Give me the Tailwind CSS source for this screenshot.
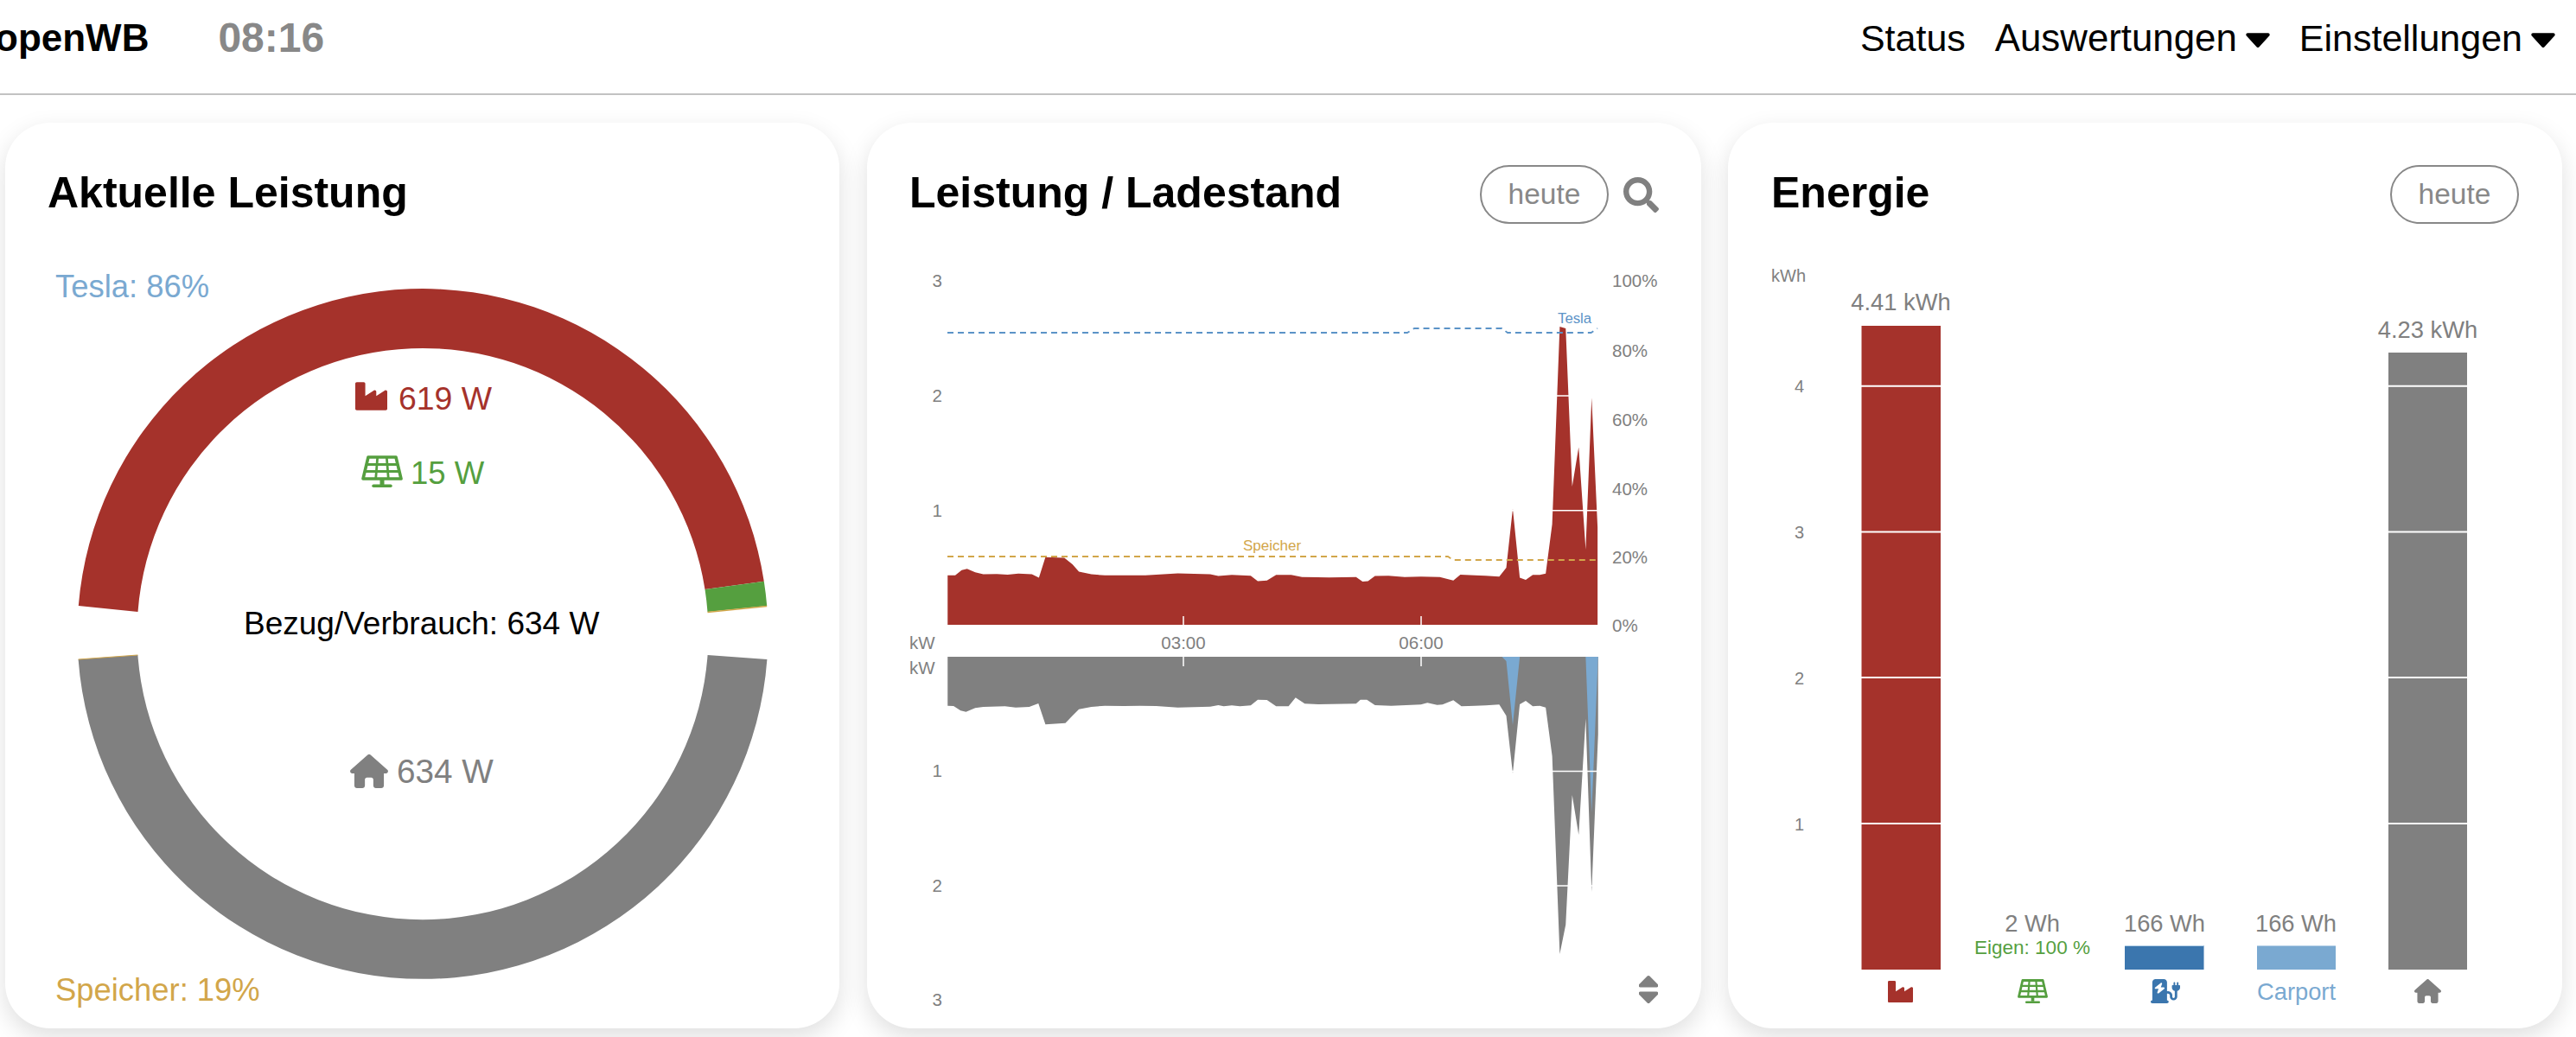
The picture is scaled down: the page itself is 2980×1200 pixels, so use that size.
<!DOCTYPE html>
<html lang="de">
<head>
<meta charset="utf-8">
<title>openWB</title>
<script src="https://cdn.jsdelivr.net/npm/@tailwindcss/browser@4"></script>
</head>
<body class="w-[2980px] h-[1200px] overflow-hidden bg-white text-black font-['Liberation_Sans',Arial,sans-serif]">
<nav class="h-[110px] flex items-center justify-between border-b-2 border-[#c2c2c2] pr-[24px] pb-[20px]">
  <div class="flex items-center gap-[80px] -ml-[6px]">
    <span class="text-[44px] font-bold">openWB</span>
    <span class="text-[48px] font-bold text-[#888888]">08:16</span>
  </div>
  <div class="flex items-center gap-[34px] text-[43px]">
    <span>Status</span>
    <span class="flex items-center gap-[10px]"><span class="text-[43.8px]">Auswertungen</span>
      <svg class="w-[28px] h-[17px] mt-[4px]" viewBox="8 190 304 170" preserveAspectRatio="none"><path d="M31.3 192h257.3c17.8 0 26.7 21.5 14.1 34.1L174.1 354.8c-7.8 7.8-20.5 7.8-28.3 0L17.2 226.1C4.6 213.5 13.5 192 31.3 192z"/></svg>
    </span>
    <span class="flex items-center gap-[10px]">Einstellungen
      <svg class="w-[28px] h-[17px] mt-[4px]" viewBox="8 190 304 170" preserveAspectRatio="none"><path d="M31.3 192h257.3c17.8 0 26.7 21.5 14.1 34.1L174.1 354.8c-7.8 7.8-20.5 7.8-28.3 0L17.2 226.1C4.6 213.5 13.5 192 31.3 192z"/></svg>
    </span>
  </div>
</nav>
<main class="flex gap-[32px] pl-[6px] pt-[32px]">

  <!-- Aktuelle Leistung -->
  <section class="w-[965px] h-[1048px] rounded-[52px] bg-white shadow-[0_10px_28px_rgba(0,0,0,0.13)] flex flex-col">
    <header class="flex items-center justify-between h-[68px] mt-[49px] pl-[49px] pr-[50px]">
      <h2 class="text-[50px] font-bold -mt-[3px]">Aktuelle Leistung</h2>
    </header>
    <svg class="w-[965px] h-[931px]" viewBox="6 259 965 931">
      <path d="M90.8 701A399.5 399.5 0 0 1 883.8 672.7L815.5 682A330.5 330.5 0 0 0 159.5 708Z" fill="#a5322b"/>
      <path d="M883.8 672.7A399.5 399.5 0 0 1 887.2 701L818.5 708A330.5 330.5 0 0 0 815.5 682Z" fill="#559f3f"/>
      <path d="M887.2 701.5L818.5 708.5" stroke="#d2a64a" stroke-width="1.5"/>
      <path d="M90.6 763A399.5 399.5 0 0 0 887.4 763L818.6 758A330.5 330.5 0 0 1 159.4 758Z" fill="#808080"/>
      <path d="M90.6 763L159.4 758" stroke="#d2a64a" stroke-width="1"/>
      <text x="64" y="344" font-size="36.4" fill="#7aa9d1">Tesla: 86%</text>
      <text x="64" y="1158" font-size="36.4" fill="#d2a64a">Speicher: 19%</text>
      <svg x="411" y="442" width="37" height="33" viewBox="0 32 512 448" fill="#a5322b"><path d="M475.115 163.781L336 252.309v-68.28c0-18.916-20.931-30.399-36.885-20.248L160 252.309V56c0-13.255-10.745-24-24-24H24C10.745 32 0 42.745 0 56v400c0 13.255 10.745 24 24 24h464c13.255 0 24-10.745 24-24V184.029c0-18.917-20.931-30.399-36.885-20.248z"/></svg>
      <text x="461" y="474" font-size="37.4" fill="#a5322b">619 W</text>
      <svg x="418" y="527" width="48" height="37" viewBox="0 0 48 37" fill="none" stroke="#559f3f" stroke-width="3.6">
        <path d="M8 2H40L46 27H2Z" stroke-linejoin="round"/>
        <path d="M18.7 2L16.7 27M29.3 2L31.3 27M5 10.5H43M3.5 18.5H44.5" stroke-width="2.8"/>
        <path d="M24 27V34" stroke-width="5"/><path d="M14 35.3H34" stroke-width="3.4" stroke-linecap="round"/>
      </svg>
      <text x="475" y="560" font-size="36.5" fill="#559f3f">15 W</text>
      <text x="282" y="734" font-size="37" fill="#000">Bezug/Verbrauch: 634 W</text>
      <svg x="405" y="873" width="44" height="39" viewBox="0 0 576 512" fill="#808080"><path d="M575.8 255.5c0 18-15 32.1-32 32.1h-32l.7 160.2c0 2.7-.2 5.4-.5 8.1V472c0 22.1-17.9 40-40 40H456c-1.1 0-2.2 0-3.3-.1c-1.4 .1-2.8 .1-4.2 .1H416 392c-22.1 0-40-17.9-40-40V448 384c0-17.7-14.3-32-32-32H256c-17.7 0-32 14.3-32 32v64 24c0 22.1-17.9 40-40 40H160 128.1c-1.5 0-3-.1-4.5-.2c-1.2 .1-2.4 .2-3.6 .2H104c-22.1 0-40-17.9-40-40V360c0-.9 0-1.9 .1-2.8V287.6H32c-18 0-32-14-32-32.1c0-9 3-17 10-24L266.4 8c7-7 15-8 22-8s15 2 21 7L564.8 231.5c8 7 12 15 11 24z"/></svg>
      <text x="459" y="906" font-size="38.7" fill="#808080">634 W</text>
    </svg>
  </section>

  <!-- Leistung / Ladestand -->
  <section class="w-[965px] h-[1048px] rounded-[52px] bg-white shadow-[0_10px_28px_rgba(0,0,0,0.13)] flex flex-col">
    <header class="flex items-center justify-between h-[68px] mt-[49px] pl-[49px] pr-[49px]">
      <h2 class="text-[50px] font-bold -mt-[3px]">Leistung / Ladestand</h2>
      <div class="flex items-center gap-[17px]">
        <button class="w-[149px] h-[68px] rounded-[34px] border-2 border-[#888888] text-[33.5px] text-[#888888]">heute</button>
        <svg class="w-[41px] h-[41px]" viewBox="0 0 512 512" fill="#808080"><path d="M505 442.7L405.3 343c-4.5-4.5-10.6-7-17-7H372c27.6-35.3 44-79.7 44-128C416 93.1 322.9 0 208 0S0 93.1 0 208s93.1 208 208 208c48.3 0 92.7-16.4 128-44v16.3c0 6.4 2.5 12.5 7 17l99.7 99.7c9.4 9.4 24.6 9.4 33.9 0l28.3-28.3c9.4-9.4 9.4-24.6.1-34zM208 336c-70.7 0-128-57.2-128-128 0-70.7 57.2-128 128-128 70.7 0 128 57.2 128 128 0 70.7-57.2 128-128 128z"/></svg>
      </div>
    </header>
    <svg class="w-[965px] h-[931px]" viewBox="1003 259 965 931">
      <g transform="translate(1000 130) scale(.625 .3954)">
        <path fill="#a5322b" d="M154 1500V1355L168 1355 180 1340 190 1336 205 1346 220 1352 245 1351 265 1353 285 1350 310 1352 323 1362 335 1302 370 1304 385 1323 397 1344 420 1352 445 1355 520 1355 580 1349 640 1352 655 1357 680 1354 715 1356 728 1372 745 1370 762 1354 790 1354 810 1360 860 1361 910 1360 922 1373 932 1372 945 1357 970 1356 1000 1360 1030 1359 1065 1360 1090 1370 1103 1353 1130 1355 1150 1356 1175 1359 1188 1333 1200 1160 1213 1362 1224 1368 1237 1354 1250 1354 1261 1350 1273 1205 1287 627 1298 632 1310 1095 1322 980 1335 1280 1346 835 1357 1214V1500Z"/>
      </g>
      <g transform="translate(1000 700) scale(.625 .3333)">
        <path fill="#808080" d="M154 180V350L165 351 178 367 188 371 205 358 220 354 260 352 280 356 305 354 322 342 335 415 372 410 385 385 397 362 420 354 445 350 480 351 510 350 540 351 580 356 640 353 655 348 665 352 680 349 695 352 715 349 728 329 745 330 762 352 785 352 798 322 815 343 840 345 910 343 918 329 930 329 945 348 975 350 1030 346 1042 340 1060 347 1070 346 1090 331 1105 352 1130 350 1150 349 1175 346 1188 385 1200 585 1213 345 1224 333 1237 352 1250 350 1261 356 1273 525 1287 1212 1298 1110 1310 660 1322 798 1335 395 1346 996 1358 450V180Z"/>
        <path fill="#7aa9d1" d="M1180 180L1188 195 1200 417 1213 180ZM1335 180L1346 720 1358 180Z"/>
      </g>
      <g stroke="#ffffff" stroke-width="1.5">
        <path d="M1096 458H1848M1096 590.7H1848M1096 892.5H1848M1096 1025H1848"/>
        <path d="M1369 713V723M1644 713V723M1369 760V771M1644 760V771"/>
      </g>
      <path d="M1096 385H1628L1636 380H1737.5L1744 385H1840.6L1848 380" fill="none" stroke="#5b93c7" stroke-width="1.8" stroke-dasharray="7 5"/>
      <path d="M1096 644H1675L1681 648H1848" fill="none" stroke="#d2a64a" stroke-width="1.8" stroke-dasharray="7 5"/>
      <text x="1802" y="374" font-size="16.8" fill="#5b93c7">Tesla</text>
      <text x="1438" y="637" font-size="17" fill="#d2a64a">Speicher</text>
      <g font-size="20.5" fill="#808080">
        <g text-anchor="end">
          <text x="1090" y="332">3</text><text x="1090" y="465">2</text><text x="1090" y="598">1</text>
          <text x="1090" y="899">1</text><text x="1090" y="1032">2</text><text x="1090" y="1164">3</text>
        </g>
        <text x="1052" y="751">kW</text><text x="1052" y="780">kW</text>
        <text x="1369" y="751" text-anchor="middle">03:00</text><text x="1644" y="751" text-anchor="middle">06:00</text>
        <text x="1865" y="332">100%</text><text x="1865" y="413">80%</text><text x="1865" y="493">60%</text><text x="1865" y="573">40%</text><text x="1865" y="652">20%</text><text x="1865" y="731">0%</text>
      </g>
      <svg x="1896" y="1129" width="22" height="32" viewBox="24 57 272 398" preserveAspectRatio="none" fill="#808080"><path d="M279 224H41c-21.4 0-32.1-25.9-17-41L143 64c9.4-9.4 24.6-9.4 33.9 0l119 119c15.2 15.1 4.5 41-16.9 41z"/><path d="M41 288h238c21.4 0 32.1 25.9 17 41L177 448c-9.4 9.4-24.6 9.4-33.9 0L24 329c-15.1-15.1-4.4-41 17-41z"/></svg>
    </svg>
  </section>

  <!-- Energie -->
  <section class="w-[965px] h-[1048px] -ml-px rounded-[52px] bg-white shadow-[0_10px_28px_rgba(0,0,0,0.13)] flex flex-col">
    <header class="flex items-center justify-between h-[68px] mt-[49px] pl-[50px] pr-[50px]">
      <h2 class="text-[50px] font-bold -mt-[3px]">Energie</h2>
      <button class="w-[149px] h-[68px] rounded-[34px] border-2 border-[#888888] text-[33.5px] text-[#888888]">heute</button>
    </header>
    <svg class="w-[965px] h-[931px]" viewBox="1999 259 965 931">
      <rect x="2153.5" y="377" width="91.5" height="745" fill="#a5322b"/>
      <rect x="2763" y="408" width="91" height="714" fill="#808080"/>
      <rect x="2458" y="1094" width="91.5" height="28" fill="#3b76ae"/>
      <rect x="2611" y="1094" width="91" height="28" fill="#7aa9d1"/>
      <path d="M2458 1094.5H2549.5M2611 1094.5H2702" stroke="#b7d1e8" stroke-width="1.2"/>
      <path d="M2100 446.7H2900M2100 615.5H2900M2100 784H2900M2100 953H2900" stroke="#ffffff" stroke-width="2"/>
      <g fill="#808080">
        <text x="2049" y="326" font-size="20">kWh</text>
        <g font-size="20" text-anchor="end">
          <text x="2087" y="454">4</text><text x="2087" y="623">3</text><text x="2087" y="792">2</text><text x="2087" y="961">1</text>
        </g>
        <g font-size="27.3" text-anchor="middle">
          <text x="2199" y="359">4.41 kWh</text>
          <text x="2808.5" y="391">4.23 kWh</text>
          <text x="2351" y="1078">2 Wh</text>
          <text x="2504" y="1078">166 Wh</text>
          <text x="2656" y="1078">166 Wh</text>
        </g>
      </g>
      <text x="2351" y="1104" font-size="22.5" text-anchor="middle" fill="#559f3f">Eigen: 100 %</text>
      <text x="2656.5" y="1157" font-size="27.3" text-anchor="middle" fill="#7aa9d1">Carport</text>
      <svg x="2184" y="1135" width="29" height="25" viewBox="0 32 512 448" preserveAspectRatio="none" fill="#a5322b"><path d="M475.115 163.781L336 252.309v-68.28c0-18.916-20.931-30.399-36.885-20.248L160 252.309V56c0-13.255-10.745-24-24-24H24C10.745 32 0 42.745 0 56v400c0 13.255 10.745 24 24 24h464c13.255 0 24-10.745 24-24V184.029c0-18.917-20.931-30.399-36.885-20.248z"/></svg>
      <svg x="2334" y="1133" width="35" height="28" viewBox="0 0 48 37" preserveAspectRatio="none" fill="none" stroke="#559f3f" stroke-width="3.8">
        <path d="M8 2H40L46 27H2Z" stroke-linejoin="round"/>
        <path d="M18.7 2L16.7 27M29.3 2L31.3 27M5 10.5H43M3.5 18.5H44.5" stroke-width="3"/>
        <path d="M24 27V34" stroke-width="5"/><path d="M14 35.3H34" stroke-width="3.4" stroke-linecap="round"/>
      </svg>
      <svg x="2488" y="1133" width="34" height="28" viewBox="0 0 576 512" preserveAspectRatio="none" fill="#3b76ae"><path d="M96 0C60.7 0 32 28.7 32 64V448c-17.7 0-32 14.3-32 32s14.3 32 32 32H320c17.7 0 32-14.3 32-32s-14.3-32-32-32V304h16c22.1 0 40 17.9 40 40v32c0 39.8 32.2 72 72 72s72-32.2 72-72V252.3c32.5-10.2 56-40.5 56-76.3V144c0-8.8-7.2-16-16-16H544V80c0-8.8-7.2-16-16-16s-16 7.2-16 16v48H480V80c0-8.8-7.2-16-16-16s-16 7.2-16 16v48H432c-8.8 0-16 7.2-16 16v32c0 35.8 23.5 66.1 56 76.3V376c0 13.3-10.7 24-24 24s-24-10.7-24-24V344c0-48.6-39.4-88-88-88H320V64c0-35.3-28.7-64-64-64H96zM216.9 82.7c6 4 8.5 11.5 6.3 18.3l-25 74.9H256c6.7 0 12.7 4.2 15 10.4s.5 13.3-4.6 17.7l-112 96c-5.5 4.7-13.4 5.1-19.3 1.1s-8.5-11.5-6.3-18.3l25-74.9H96c-6.7 0-12.7-4.2-15-10.4s-.5-13.3 4.6-17.7l112-96c5.5-4.7 13.4-5.1 19.3-1.1z"/></svg>
      <svg x="2793" y="1133" width="31" height="28" viewBox="0 0 576 512" preserveAspectRatio="none" fill="#808080"><path d="M575.8 255.5c0 18-15 32.1-32 32.1h-32l.7 160.2c0 2.7-.2 5.4-.5 8.1V472c0 22.1-17.9 40-40 40H456c-1.1 0-2.2 0-3.3-.1c-1.4 .1-2.8 .1-4.2 .1H416 392c-22.1 0-40-17.9-40-40V448 384c0-17.7-14.3-32-32-32H256c-17.7 0-32 14.3-32 32v64 24c0 22.1-17.9 40-40 40H160 128.1c-1.5 0-3-.1-4.5-.2c-1.2 .1-2.4 .2-3.6 .2H104c-22.1 0-40-17.9-40-40V360c0-.9 0-1.9 .1-2.8V287.6H32c-18 0-32-14-32-32.1c0-9 3-17 10-24L266.4 8c7-7 15-8 22-8s15 2 21 7L564.8 231.5c8 7 12 15 11 24z"/></svg>
    </svg>
  </section>
</main>
</body>
</html>
